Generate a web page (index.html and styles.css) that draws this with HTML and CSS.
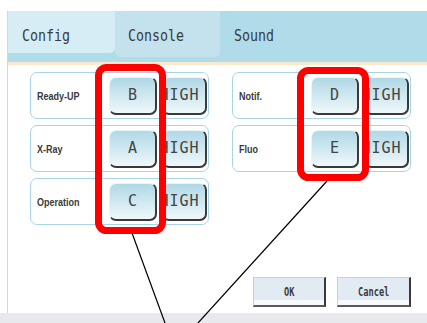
FILE: index.html
```html
<!DOCTYPE html>
<html>
<head>
<meta charset="utf-8">
<link rel="stylesheet" href="styles.css">
</head>
<body>
<div class="screen">
  <div class="frame">
    <div class="tabs">
      <div class="tab tab-config"><span class="tt">Config</span></div>
      <div class="tab tab-console"><span class="tt">Console</span></div>
      <div class="tab tab-sound"><span class="tt">Sound</span></div>
    </div>
    <div class="content">
      <div class="groups">
        <div class="group">
          <div class="row"><span class="label">Ready-UP</span><div class="btn key"><span class="bt">B</span></div><div class="btn high"><span class="hi">HIGH</span></div></div>
          <div class="row"><span class="label">X-Ray</span><div class="btn key"><span class="bt">A</span></div><div class="btn high"><span class="hi">HIGH</span></div></div>
          <div class="row"><span class="label">Operation</span><div class="btn key"><span class="bt">C</span></div><div class="btn high"><span class="hi">HIGH</span></div></div>
        </div>
        <div class="group">
          <div class="row"><span class="label">Notif.</span><div class="btn key"><span class="bt">D</span></div><div class="btn high"><span class="hi">HIGH</span></div></div>
          <div class="row"><span class="label">Fluo</span><div class="btn key"><span class="bt">E</span></div><div class="btn high"><span class="hi">HIGH</span></div></div>
        </div>
      </div>
      <div class="actions">
        <div class="act ok"><span class="at">OK</span></div>
        <div class="act cancel"><span class="at">Cancel</span></div>
      </div>
    </div>
  </div>
  <div class="footer"></div>
  <svg class="annot" width="427" height="323" viewBox="0 0 427 323">
    <line x1="132" y1="233" x2="165" y2="323" stroke="#000" stroke-width="1.2"/>
    <line x1="327" y1="181" x2="198" y2="323" stroke="#000" stroke-width="1.2"/>
    <rect x="98.5" y="67.5" width="64" height="163" rx="8" fill="none" stroke="#ff0000" stroke-width="7"/>
    <rect x="300.5" y="70.5" width="65" height="107" rx="8" fill="none" stroke="#ff0000" stroke-width="7"/>
  </svg>
</div>
</body>
</html>
```
FILE: styles.css
```css
* { box-sizing: border-box; }
body { margin: 0; background: #fff; }
.screen {
  position: relative;
  width: 427px;
  height: 323px;
  overflow: hidden;
  background: #fff;
}
.frame {
  margin: 11px 0 0 7px;
  height: 302px;
  border-left: 1px solid #d6d6d6;
  display: flex;
  flex-direction: column;
}
.tabs {
  height: 54px;
  background: #b0dce9;
  border-bottom: 3px solid #fbe9cc;
  display: flex;
  align-items: flex-start;
}
.tab {
  padding-top: 17px;
  font-family: "DejaVu Sans Mono", monospace;
  font-size: 16px;
  line-height: 16px;
  color: #3a3a3a;
}
.tt { display: inline-block; transform: scaleX(0.83); transform-origin: left center; }
.tab-config {
  width: 107px;
  height: 42px;
  padding-left: 14px;
  background: #d6edf6;
  border-bottom-right-radius: 5px;
}
.tab-console {
  width: 105px;
  height: 46px;
  padding-left: 13px;
  background: #c3e2ee;
  border-bottom-left-radius: 5px;
  border-bottom-right-radius: 5px;
}
.tab-sound { padding-left: 14px; }
.content {
  flex: 1;
  display: flex;
  flex-direction: column;
  padding: 7px 16px 6px 22px;
}
.groups {
  display: grid;
  grid-template-columns: 179px 179px;
  column-gap: 23px;
  align-items: start;
}
.group { display: flex; flex-direction: column; gap: 6px; }
.row {
  height: 47px;
  border: 1.5px solid #a8d4e4;
  border-radius: 7px;
  background: #fff;
  display: flex;
  align-items: flex-start;
  padding: 3.5px 1px 0 6px;
}
.label {
  flex: 1;
  align-self: center;
  font-family: "Liberation Sans", Arial, sans-serif;
  font-weight: bold;
  font-size: 10px;
  color: #3a3a3a;
  margin-top: -2px;
  white-space: nowrap;
}
.label { display: inline-block; transform: scaleX(0.9); transform-origin: left center; }
.btn {
  flex: none;
  height: 38px;
  border-radius: 7px;
  background: linear-gradient(#b0d8e6, #eff8fb);
  border-top: 1px solid #e8f4f8;
  border-left: 1px solid #e8f4f8;
  border-right: 2px solid #3a3a3a;
  border-bottom: 2px solid #3a3a3a;
  display: flex;
  align-items: center;
  overflow: hidden;
  font-family: "DejaVu Sans Mono", monospace;
  font-size: 15px;
  color: #444;
}
.key { width: 48px; margin-right: 5px; justify-content: center; }
.high { width: 45px; justify-content: flex-start; }
.hi {
  flex: none;
  margin-left: -3.5px;
  letter-spacing: 1px;
  white-space: nowrap;
}
.actions {
  margin-top: auto;
  display: flex;
  justify-content: flex-end;
  gap: 11px;
}
.act {
  height: 30px;
  background: linear-gradient(#e2ebf3 0, #e2ebf3 82%, #f7fafc 82%);
  border-top: 1px solid #cfcfcf;
  border-left: 1px solid #cfcfcf;
  border-right: 2px solid #3a3a3a;
  border-bottom: 2px solid #5a5a5a;
  display: flex;
  align-items: center;
  justify-content: center;
  font-family: "DejaVu Sans Mono", monospace;
  font-weight: bold;
  font-size: 12px;
  color: #3a3a3a;
}
.at { display: inline-block; transform: scaleX(0.72); }
.ok { width: 73px; }
.cancel { width: 74px; }
.footer { height: 10px; background: #e7e9ed; }
.annot { position: absolute; left: 0; top: 0; pointer-events: none; }
```
